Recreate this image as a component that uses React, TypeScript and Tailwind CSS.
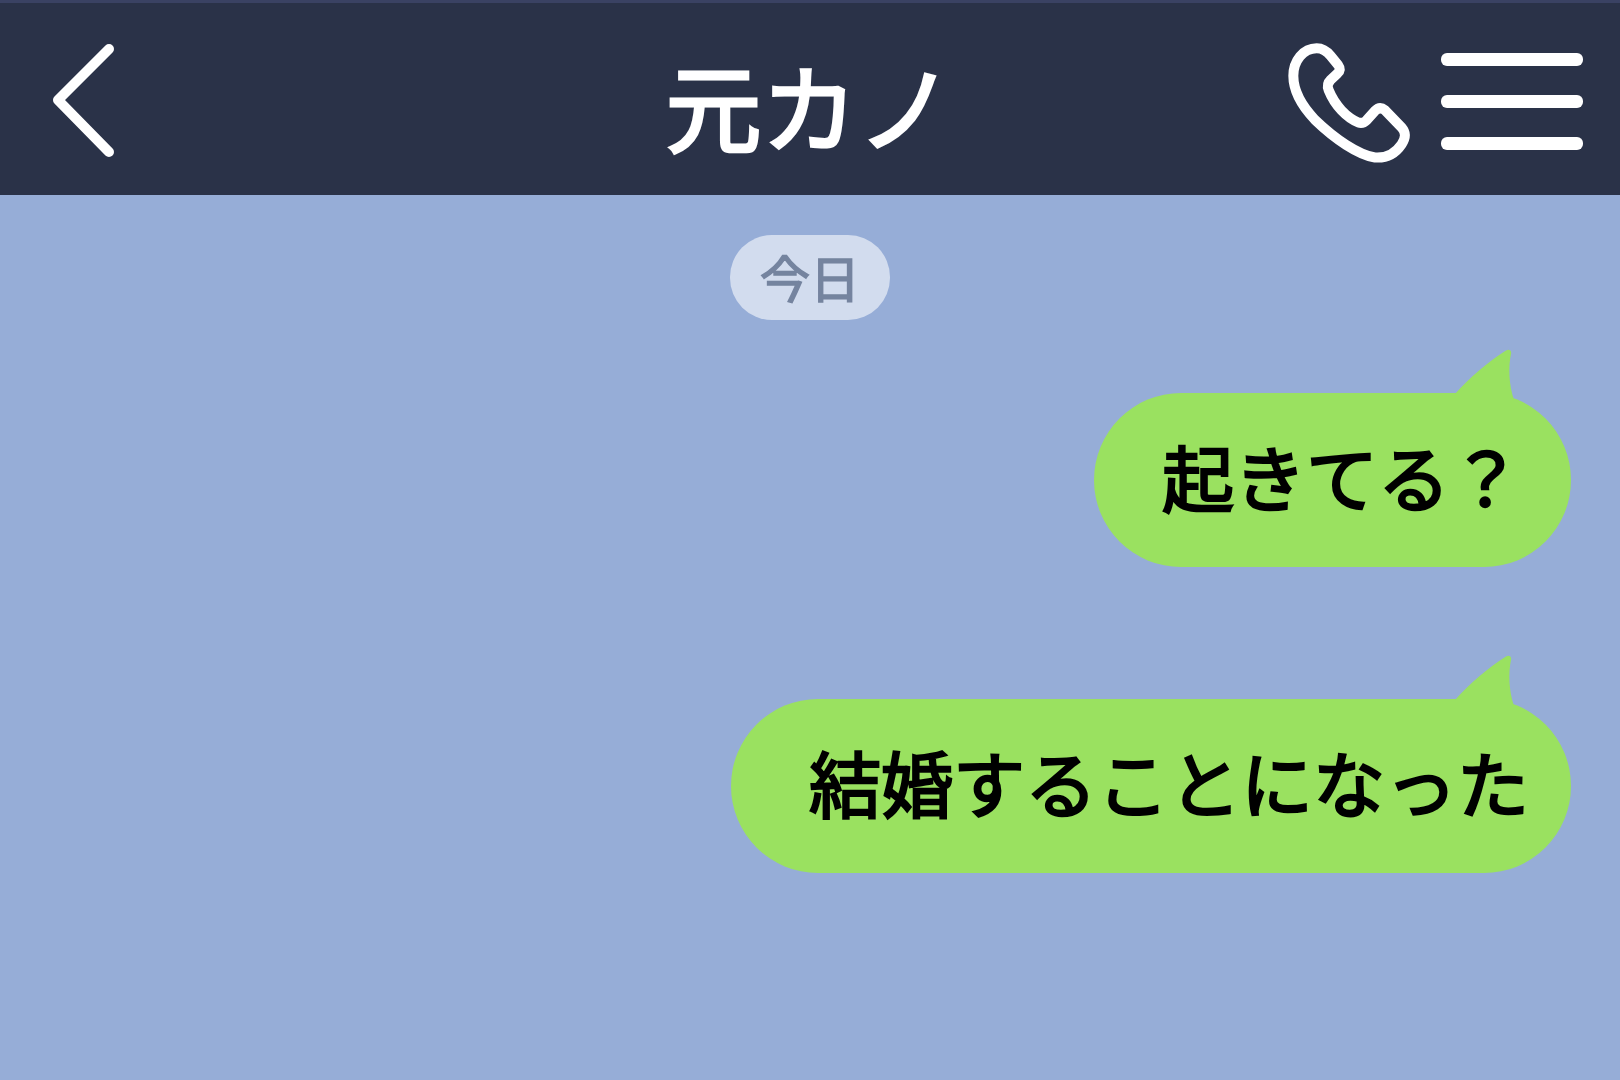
export default function App() {
  const font = { fontFamily: '"Noto Sans CJK JP", "Noto Sans", sans-serif' };
  const Tail = () => (
    <svg className="absolute right-[46px] top-[-46px]" width="70" height="70" viewBox="0 0 70 70">
      <path d="M0 47 C14 31 34 14 51 3.5 C54 2 56 3 56.2 6 C53 20 54 38 59 53 L40 70 L0 70 Z" fill="#9ae160" />
    </svg>
  );
  const Bubble = ({ text, cls }: { text: string; cls: string }) => (
    <div className={`relative flex h-[174px] items-center rounded-[87px] bg-[#9ae160] text-[72px] font-normal leading-none text-black [-webkit-text-stroke:2.4px_#000] ${cls}`}>
      <Tail />
      <span className="mb-[10px] whitespace-nowrap">{text}</span>
    </div>
  );
  return (
    <div className="flex h-[1080px] w-[1620px] flex-col overflow-hidden bg-[#96add7]" style={font}>
      <header className="grid h-[195px] shrink-0 grid-cols-[1fr_auto_1fr] items-center border-t-[3px] border-t-[#3a4263] bg-[#2a3248] pl-[48px] pr-[37px]">
        <svg width="70" height="120" viewBox="48 39 70 120" className="mt-[-1px]">
          <path d="M109 49 L58 100 L109 152" fill="none" stroke="#fff" strokeWidth="10" strokeLinecap="round" strokeLinejoin="round" />
        </svg>
        <h1 className="mr-[12px] mt-[10px] text-[96px] font-normal leading-none text-white [-webkit-text-stroke:3px_#fff]">元カノ</h1>
        <div className="flex items-center justify-end gap-[26px]">
          <svg width="130" height="127" viewBox="75 55 390 380" className="mt-[6px]">
            <path
              d="M170 82 C188 82 200 90 212 105 L234 132 C242 143 241 150 232 158 L212 177 C203 186 201 195 206 208 C225 255 260 290 295 305 C305 308 312 306 320 298 L345 270 C355 260 365 260 375 268 L425 320 C438 335 438 350 425 370 C405 400 375 412 345 410 C295 402 225 355 165 297 C125 255 100 210 100 165 C100 120 130 82 170 82 Z"
              fill="none"
              stroke="#fff"
              strokeWidth="30"
              strokeLinejoin="round"
            />
          </svg>
          <div className="mt-[4px] flex w-[142px] flex-col gap-[29px]">
            <div className="h-[13px] rounded-[6px] bg-white" />
            <div className="h-[13px] rounded-[6px] bg-white" />
            <div className="h-[13px] rounded-[6px] bg-white" />
          </div>
        </div>
      </header>
      <main className="flex flex-col pt-[40px]">
        <div className="flex justify-center">
          <div className="flex h-[85px] w-[160px] items-center justify-center rounded-[42px] bg-[#d2dcee] pb-[4px] text-[50px] font-normal leading-none text-[#75849f] [-webkit-text-stroke:1.5px_#75849f]">
            今日
          </div>
        </div>
        <div className="mt-[73px] flex flex-col items-end gap-[132px] pr-[49px]">
          <Bubble text="起きてる？" cls="w-[477px] pl-[68px]" />
          <Bubble text="結婚することになった" cls="w-[840px] pl-[78px]" />
        </div>
      </main>
    </div>
  );
}
